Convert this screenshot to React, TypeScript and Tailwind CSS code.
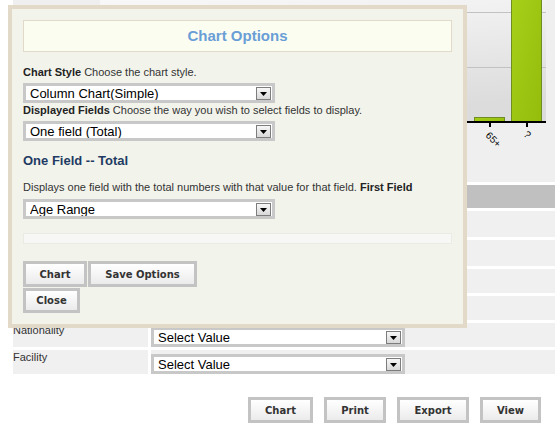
import React from "react";

// the first rows sit under the dialog, so only their backgrounds show at the right
const rows = [
  { label: "", h: "h-[26px]", select: false },
  { label: "", h: "h-[26px]", select: false },
  { label: "", h: "h-[24px]", select: false },
  { label: "", h: "h-[24px]", select: false },
  { label: "Nationality", h: "h-[24px]", select: true },
  { label: "Facility", h: "h-[24px]", select: true },
];

function FakeSelect({ value, width }: { value: string; width: string }) {
  return (
    <div
      className={`flex h-[20px] items-center border-[3px] border-[#c8c8c8] bg-white pl-[4px] pr-[1px] ${width}`}
    >
      <span className="flex-1 truncate text-[13px] leading-none text-black">
        {value}
      </span>
      <span className="flex h-[13px] w-[15px] items-center justify-center border border-[#7d7d7d] bg-linear-to-b from-[#f7f7f7] to-[#d8d8d8] pt-[2px]">
        <svg width="7" height="4" viewBox="0 0 7 4">
          <path d="M0 0h7L3.5 4z" fill="#000" />
        </svg>
      </span>
    </div>
  );
}

function Btn({ label, className }: { label: string; className: string }) {
  return (
    <button
      type="button"
      className={`flex items-center justify-center whitespace-nowrap border-[3px] border-[#c3c3c3] bg-linear-to-b from-white to-[#ebebeb] font-['DejaVu_Sans',Verdana,sans-serif] text-[10px] font-bold text-[#333] ${className}`}
    >
      {label}
    </button>
  );
}

function ChartBackdrop() {
  return (
    <svg width="542" height="182" viewBox="13 0 542 182" className="block">
      <defs>
        <linearGradient id="plotBg" x1="0" y1="0" x2="0.25" y2="1">
          <stop offset="0" stopColor="#f8f8f8" />
          <stop offset="1" stopColor="#dcdcdc" />
        </linearGradient>
        <linearGradient id="barFill" x1="0" y1="0" x2="1" y2="1">
          <stop offset="0" stopColor="#a7d01a" />
          <stop offset="1" stopColor="#93bc0c" />
        </linearGradient>
      </defs>
      <rect x="13" y="0" width="542" height="182" fill="#efefef" />
      <rect x="100" y="0" width="446" height="121" fill="url(#plotBg)" />
      <line x1="100" y1="12.5" x2="546" y2="12.5" stroke="#c2c2c2" />
      <line x1="100" y1="67.5" x2="546" y2="67.5" stroke="#c2c2c2" />
      <rect x="474.5" y="117.5" width="30" height="4" fill="url(#barFill)" stroke="#6f8d22" />
      <rect x="511.5" y="-2" width="30" height="123.5" fill="url(#barFill)" stroke="#6f8d22" />
      <rect x="100" y="121" width="446" height="2" fill="#000" />
      <rect x="489" y="123" width="2" height="4" fill="#000" />
      <rect x="526" y="123" width="2" height="4" fill="#000" />
      <text
        x="485"
        y="136"
        fontSize="10"
        fontFamily="Liberation Sans, Arial, sans-serif"
        fill="#000"
        transform="rotate(45 485 136)"
      >
        65+
      </text>
      <text
        x="523"
        y="135"
        fontSize="10"
        fontFamily="Liberation Sans, Arial, sans-serif"
        fill="#000"
        transform="rotate(45 523 135)"
      >
        ?
      </text>
    </svg>
  );
}

export default function App() {
  return (
    <div className="relative h-[432px] w-[555px] overflow-hidden bg-white font-['Liberation_Sans',Arial,sans-serif]">
      {/* page behind the dialog */}
      <div className="flex flex-col pl-[13px]">
        <ChartBackdrop />
        <div className="mt-[3px] h-[23px] bg-[#c0c0c0]" />
        <div className="mt-[3px] flex flex-col gap-[3px]">
          {rows.map((row, i) => (
            <div key={i} className={`flex ${row.h}`}>
              <div className="w-[135px] bg-[#f0f0f0] pt-[1px] text-[11px] leading-[13px] text-[#333]">
                {row.label}
              </div>
              <div className="ml-[3px] flex flex-1 items-end bg-[#f0f0f0]">
                {row.select && (
                  <FakeSelect value="Select Value" width="w-[254px]" />
                )}
              </div>
            </div>
          ))}
        </div>
        <div className="mt-[23px] flex justify-end gap-[11px] pr-[14px]">
          <Btn label="Chart" className="h-[26px] w-[65px]" />
          <Btn label="Print" className="h-[26px] w-[62px]" />
          <Btn label="Export" className="h-[26px] w-[72px]" />
          <Btn label="View" className="h-[26px] w-[61px]" />
        </div>
      </div>

      {/* chart options dialog */}
      <div className="absolute left-[8px] top-[5px] flex h-[323px] w-[459px] flex-col border-4 border-[#e2d9c8] bg-[#f2f4ec] px-[11px] pt-[11px]">
        <div className="flex h-[32px] items-center justify-center border border-[#e2dac8] bg-[#fbfdf1] text-[15px] font-bold text-[#6a9ed6]">
          Chart Options
        </div>
        <p className="mt-[14px] text-[11px] leading-[13px] text-[#333]">
          <b className="text-[#222]">Chart Style</b> Choose the chart style.
        </p>
        <div className="mt-[4px]">
          <FakeSelect value="Column Chart(Simple)" width="w-[252px]" />
        </div>
        <p className="mt-[1px] text-[11px] leading-[13px] text-[#333]">
          <b className="text-[#222]">Displayed Fields</b> Choose the way you
          wish to select fields to display.
        </p>
        <div className="mt-[4px]">
          <FakeSelect value="One field (Total)" width="w-[252px]" />
        </div>
        <h3 className="mt-[12px] text-[13px] font-bold leading-[15px] text-[#1f3b63]">
          One Field -- Total
        </h3>
        <p className="mt-[13px] text-[11px] leading-[13px] text-[#333]">
          Displays one field with the total numbers with that value for that
          field. <b className="text-[#222]">First Field</b>
        </p>
        <div className="mt-[5px]">
          <FakeSelect value="Age Range" width="w-[252px]" />
        </div>
        <div className="mt-[14px] h-[11px] border border-[#ebebe5] bg-[#f7f7f5]" />
        <div className="mt-[17px] flex gap-[1px]">
          <Btn label="Chart" className="h-[26px] w-[64px]" />
          <Btn label="Save Options" className="h-[26px] w-[109px]" />
        </div>
        <div className="mt-[1px] flex">
          <Btn label="Close" className="h-[25px] w-[57px]" />
        </div>
      </div>
    </div>
  );
}
